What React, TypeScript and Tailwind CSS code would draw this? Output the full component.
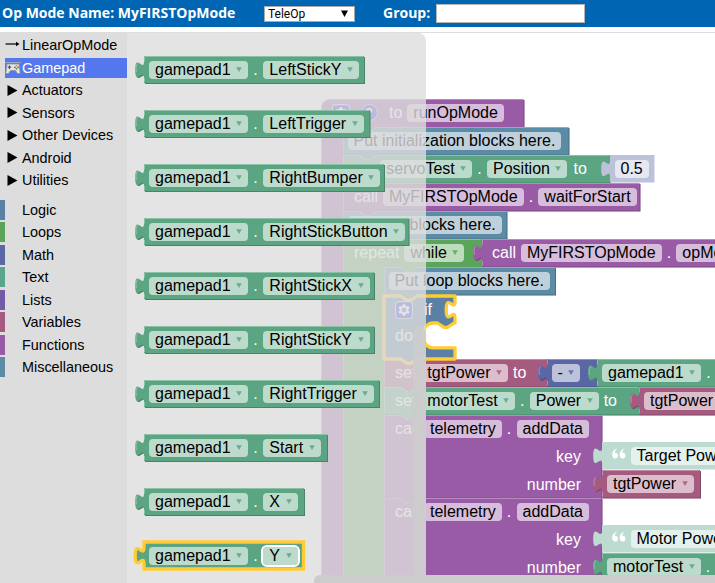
import React from "react";

const GREEN = "#5ba582";
const PURPLE = "#995ba5";
const COMMENT = "#5b8ba5";
const LOOP = "#5ba55b";
const LOGIC = "#5b80a5";
const VARIABLE = "#a55b80";
const MATH = "#5b67a5";
const NUMBER_SHADOW = "#bdc2db";
const TEXT_SHADOW = "#bddbd1";

type Kind = "value" | "statement" | "hat" | "if" | "topLoop";

const NOTCH_RIGHT = "l6.6,4.4 h3.3 l6.6,-4.4";
const NOTCH_LEFT = "l-6.6,4.4 h-3.3 l-6.6,-4.4";
const TAB_UP = "c0,-11 -8.8,8.8 -8.8,-8.25 s8.8,2.75 8.8,-8.25";
const TAB_DOWN = "c0,11 -8.8,-8.8 -8.8,8.25 s8.8,-2.75 8.8,8.25";

function outline(kind: Kind, w: number, h: number): string {
  switch (kind) {
    case "value":
      return `M0,0 H${w} V${h} H0 V22 ${TAB_UP} z`;
    case "hat":
      return `M0,8.8 A8.8,8.8 0 0 1 8.8,0 H${w} V28 H55 ${NOTCH_LEFT} H22 V${h} H0 z`;
    case "topLoop":
      return `M0,0 H16.5 ${NOTCH_RIGHT} H${w} V28 H74 ${NOTCH_LEFT} H41 V${h} H0 z`;
    case "if":
      return `M0,0 H16.5 ${NOTCH_RIGHT} H${w} V5.5 ${TAB_DOWN} V27 H70 ${NOTCH_LEFT} H48.8 a8.8,8.8 0 0 0 -8.8,8.8 V43 a8.8,8.8 0 0 0 8.8,8.8 H${w} V${h} H33 ${NOTCH_LEFT} H0 z`;
    default:
      return `M0,0 H16.5 ${NOTCH_RIGHT} H${w} V${h} H33 ${NOTCH_LEFT} H0 z`;
  }
}

function highlight(kind: Kind, w: number, h: number): string {
  if (kind === "value") return `M${w - 0.5},0.5 H0.5 V5.5 M-7.6,16 q-1.2,-8 1.6,-8.5 M0.5,22 V${h - 1}`;
  if (kind === "hat") return `M0.5,${h} V8.8 A8.3,8.3 0 0 1 8.8,0.5 H${w - 0.5}`;
  return `M0.5,${h - 1} V0.5 H16.5 ${NOTCH_RIGHT} H${w - 0.5}`;
}

interface BlockProps {
  x: number;
  y: number;
  w: number;
  h?: number;
  color: string;
  kind?: Kind;
  selected?: boolean;
  flat?: boolean;
  indent?: boolean;
  children?: React.ReactNode;
}

function Block({ x, y, w, h = 27.5, color, kind = "statement", selected, flat, indent, children }: BlockProps) {
  const d = outline(kind, w, h);
  return (
    <div className="absolute" style={{ left: x, top: y, width: w, height: h }}>
      <svg className="absolute top-0 left-0 h-full w-full overflow-visible">
        {!flat && !selected && (
          <>
            <path d={d} fill={color} transform="translate(1 1)" />
            <path d={d} fill="#000" fillOpacity="0.2" transform="translate(1 1)" />
          </>
        )}
        <path
          d={d}
          fill={color}
          stroke={selected ? "#fc3" : "none"}
          strokeWidth={selected ? 3.3 : 0}
          strokeLinejoin={kind === "if" ? "round" : "miter"}
        />
        {!flat && !selected && (
          <path d={highlight(kind, w, h)} fill="none" stroke="#fff" strokeOpacity="0.3" />
        )}
      </svg>
      <div
        className={`relative flex items-start gap-[5px] pt-[5px] text-base leading-[17px] whitespace-nowrap text-white ${
          indent ? "pl-[11.5px]" : "pl-[5px]"
        }`}
      >
        {children}
      </div>
    </div>
  );
}

function Dot() {
  return <span className="mr-[0.25px]">.</span>;
}

function Field({ text, arrow, active }: { text: string; arrow?: string; active?: boolean }) {
  return (
    <span
      className={`flex h-[17.5px] shrink-0 items-center gap-[5.5px] rounded-[4px] bg-white/60 px-[6px] text-black ${
        active ? "outline-2 outline-white" : ""
      }`}
    >
      <span>{text}</span>
      {arrow && (
        <svg width="6" height="5" viewBox="0 0 6 5" className="shrink-0">
          <path d="M0.2,0.2 H5.8 L3,5 z" fill={arrow} fillOpacity="0.85" />
        </svg>
      )}
    </span>
  );
}

function Gear() {
  return (
    <svg width="18" height="18" viewBox="0 0 16 16" className="shrink-0">
      <rect x="0.5" y="0.5" width="15" height="15" rx="3" fill="#00f" fillOpacity="0.6" stroke="#c5cbf0" />
      <path
        fill="#fff"
        d="m4.203,7.296 0,1.368 -0.92,0.677 -0.11,0.41 0.9,1.559 0.41,0.11 1.043,-0.457 1.187,0.683 0.127,1.134 0.3,0.3 1.8,0 0.3,-0.299 0.127,-1.138 1.185,-0.682 1.046,0.458 0.409,-0.11 0.9,-1.559 -0.11,-0.41 -0.92,-0.677 0,-1.366 0.92,-0.677 0.11,-0.41 -0.9,-1.559 -0.409,-0.109 -1.046,0.458 -1.185,-0.682 -0.127,-1.138 -0.3,-0.299 -1.8,0 -0.3,0.3 -0.126,1.135 -1.187,0.682 -1.043,-0.457 -0.41,0.11 -0.899,1.559 0.108,0.409z"
      />
      <circle cx="8" cy="8" r="2.2" fill="#5555dd" />
    </svg>
  );
}

function Help() {
  return (
    <span className="flex h-[17px] w-[17px] shrink-0 items-center justify-center rounded-full border border-[#c5cbf0] bg-[#0000ff99] text-[13px] font-bold">
      ?
    </span>
  );
}

function OpenQuote() {
  return (
    <svg width="14" height="12" viewBox="0 0 14 12" className="mt-[1px] ml-[5px] shrink-0">
      <path
        d="M5.8,0.4 C3.8,1.3 2.8,3 2.7,4.8 C4.6,4.4 6,5.7 6,7.5 C6,9.4 4.8,10.6 3.2,10.6 C1.2,10.6 0.2,9 0.2,6.8 C0.2,3.6 2.2,0.8 5.8,0.4 z M13.3,0.4 C11.3,1.3 10.3,3 10.2,4.8 C12.1,4.4 13.5,5.7 13.5,7.5 C13.5,9.4 12.3,10.6 10.7,10.6 C8.7,10.6 7.7,9 7.7,6.8 C7.7,3.6 9.7,0.8 13.3,0.4 z"
        fill="#fff"
      />
    </svg>
  );
}

function Telemetry({ y }: { y: number }) {
  return (
    <Block x={384} y={y} w={217.5} h={82.7} color={PURPLE} indent>
      <div className="flex w-[186px] flex-col gap-[10.5px]">
        <div className="flex gap-[5px]">
          <span>call</span>
          <Field text="telemetry" />
          <Dot />
          <Field text="addData" />
        </div>
        <span className="text-right">key</span>
        <span className="text-right">number</span>
      </div>
    </Block>
  );
}

function Workspace() {
  return (
    <div className="absolute -top-[33.5px] -left-[127.5px] h-[585px] w-[716px]">
      <Block x={321} y={99.5} w={202.5} h={500} color={PURPLE} kind="hat" indent>
        <Gear />
        <span className="ml-[5.5px] flex">
          <Help />
        </span>
        <span className="ml-[6.5px]">to</span>
        <Field text="runOpMode" />
      </Block>
      <Block x={343} y={127.5} w={225.5} color={COMMENT}>
        <Field text="Put initialization blocks here." />
      </Block>
      <Block x={343} y={155.5} w={267} color={GREEN} indent>
        <span>set</span>
        <Field text="servoTest" arrow={GREEN} />
        <Dot />
        <Field text="Position" arrow={GREEN} />
        <span className="ml-px">to</span>
      </Block>
      <Block x={610} y={155.5} w={44.5} color={NUMBER_SHADOW} kind="value" flat>
        <Field text="0.5" />
      </Block>
      <Block x={343} y={183.5} w={296.5} color={PURPLE} indent>
        <span>call</span>
        <Field text="MyFIRSTOpMode" />
        <Dot />
        <Field text="waitForStart" />
      </Block>
      <Block x={343} y={211.5} w={163.5} color={COMMENT}>
        <Field text="Put run blocks here." />
      </Block>
      <Block x={343} y={239.5} w={139} h={400} color={LOOP} kind="topLoop" indent>
        <span>repeat</span>
        <Field text="while" arrow={LOOP} />
      </Block>
      <Block x={482} y={239.5} w={300} color={PURPLE} kind="value" indent>
        <span className="-ml-px">call</span>
        <Field text="MyFIRSTOpMode" />
        <Dot />
        <Field text="opModeIsActive" />
      </Block>
      <Block x={384} y={267.5} w={171} color={COMMENT}>
        <Field text="Put loop blocks here." />
      </Block>
      <Block x={384} y={359.5} w={163} color={VARIABLE} indent>
        <span>set</span>
        <Field text="tgtPower" arrow={VARIABLE} />
        <span>to</span>
      </Block>
      <Block x={547} y={359.5} w={50.5} color={MATH} kind="value">
        <Field text="-" arrow={MATH} />
      </Block>
      <Block x={597.5} y={359.5} w={250} color={GREEN} kind="value">
        <Field text="gamepad1" arrow={GREEN} />
        <Dot />
      </Block>
      <Block x={384} y={387.5} w={255} color={GREEN} indent>
        <span>set</span>
        <Field text="motorTest" arrow={GREEN} />
        <Dot />
        <Field text="Power" arrow={GREEN} />
        <span>to</span>
      </Block>
      <Block x={639.5} y={387.5} w={100} color={VARIABLE} kind="value">
        <Field text="tgtPower" arrow={VARIABLE} />
      </Block>
      <Telemetry y={415.5} />
      <Block x={602} y={442.5} w={200} color={TEXT_SHADOW} kind="value" flat>
        <OpenQuote />
        <Field text="Target Power" />
      </Block>
      <Block x={602.5} y={470.7} w={98} color={VARIABLE} kind="value">
        <Field text="tgtPower" arrow={VARIABLE} />
      </Block>
      <Telemetry y={498.5} />
      <Block x={602} y={525.5} w={200} color={TEXT_SHADOW} kind="value" flat>
        <OpenQuote />
        <Field text="Motor Power" />
      </Block>
      <Block x={602.5} y={553.7} w={200} color={GREEN} kind="value">
        <Field text="motorTest" arrow={GREEN} />
        <Dot />
      </Block>
      <Block x={384.5} y={296.2} w={71} h={63} color={LOGIC} kind="if" selected indent>
        <div className="-ml-[0.5px] flex flex-col gap-[8px]">
          <div className="flex items-start gap-[11px]">
            <Gear />
            <span>if</span>
          </div>
          <span>do</span>
        </div>
      </Block>
    </div>
  );
}

const FLYOUT: { name: string; w: number }[] = [
  { name: "LeftStickY", w: 220.5 },
  { name: "LeftTrigger", w: 226 },
  { name: "RightBumper", w: 240.5 },
  { name: "RightStickButton", w: 265 },
  { name: "RightStickX", w: 230.5 },
  { name: "RightStickY", w: 230.5 },
  { name: "RightTrigger", w: 235.5 },
  { name: "Start", w: 183.5 },
  { name: "X", w: 160.5 },
  { name: "Y", w: 160 },
];

function Flyout() {
  return (
    <div className="absolute inset-0">
      <div className="h-full w-[299px] rounded-tr-[8px] bg-[#ddd]/80" />
      {FLYOUT.map((b, i) => (
        <Block
          key={b.name}
          x={17}
          y={23 + i * 54}
          w={b.w - 0.5}
          h={27}
          color={GREEN}
          kind="value"
          selected={b.name === "Y"}
        >
          <Field text="gamepad1" arrow={GREEN} />
          <span className="mr-[0.75px]">.</span>
          <Field text={b.name} arrow={GREEN} active={b.name === "Y"} />
        </Block>
      ))}
    </div>
  );
}

function GamepadIcon() {
  return (
    <svg width="16" height="14" viewBox="0 0 16 14" className="shrink-0">
      <path d="M0,1.5 H16" stroke="#9aa6c8" />
      <path d="M2,3 H14 L15.2,12.5 H12.5 L10.5,9.5 H5.5 L3.5,12.5 H0.8 z" fill="#e6e6e0" stroke="#8d93a8" strokeWidth="0.8" />
      <path d="M4.5,4.5 v3.4 M2.8,6.2 h3.4" stroke="#555" strokeWidth="1.2" />
      <circle cx="11.5" cy="4.8" r="0.9" fill="#b9a23a" />
      <circle cx="11.5" cy="7.8" r="0.9" fill="#4c8a4c" />
      <circle cx="9.9" cy="6.3" r="0.9" fill="#4a5fa8" />
      <circle cx="13.1" cy="6.3" r="0.9" fill="#a84a4a" />
    </svg>
  );
}

function Toolbox() {
  const groups = ["Actuators", "Sensors", "Other Devices", "Android", "Utilities"];
  const categories = [
    { name: "Logic", bar: "bg-[#5b80a5]" },
    { name: "Loops", bar: "bg-[#5ba55b]" },
    { name: "Math", bar: "bg-[#5b67a5]" },
    { name: "Text", bar: "bg-[#5ba58c]" },
    { name: "Lists", bar: "bg-[#745ba5]" },
    { name: "Variables", bar: "bg-[#a55b80]" },
    { name: "Functions", bar: "bg-[#995ba5]" },
    { name: "Miscellaneous", bar: "bg-[#5b8ba5]" },
  ];
  return (
    <nav className="flex w-[127px] shrink-0 flex-col bg-[#ddd] pt-[3px] text-[14.4px] leading-5 text-black">
      <div className="mb-[2.5px] flex h-5 items-center pl-[5px]">
        <svg width="17" height="10" viewBox="0 0 17 10" className="shrink-0">
          <path d="M0.5,4 H12" stroke="#000" strokeWidth="1.2" />
          <path d="M11,1.8 L14.5,4 L11,6.2 z" />
        </svg>
        LinearOpMode
      </div>
      <div className="mb-[2.5px] ml-[5px] flex h-5 items-center gap-px bg-[#57e] text-white">
        <GamepadIcon />
        Gamepad
      </div>
      {groups.map((g) => (
        <div key={g} className="mb-[2.5px] flex h-5 items-center gap-1 pl-[7px]">
          <svg width="11" height="11" viewBox="0 0 11 11" className="shrink-0">
            <path d="M0.5,0 L10.5,5.5 L0.5,11 z" />
          </svg>
          {g}
        </div>
      ))}
      <div className="h-[7px]" />
      {categories.map((c) => (
        <div key={c.name} className="mb-[2.5px] flex h-5 items-center gap-[17px]">
          <div className={`h-5 w-[5px] ${c.bar}`} />
          {c.name}
        </div>
      ))}
    </nav>
  );
}

export default function App() {
  return (
    <div className="flex h-[583px] w-[715px] flex-col overflow-hidden bg-white font-['Liberation_Sans',Arial,sans-serif]">
      <header className="flex h-[27px] shrink-0 items-center bg-[#0066b3] pl-[2px] font-['Open_Sans',sans-serif] text-[14px] font-bold text-white">
        <span className="w-[262px] pb-[2px] whitespace-nowrap">Op Mode Name: MyFIRSTOpMode</span>
        <div className="flex h-4 w-[91px] items-center justify-between border border-[#a9a9a9] bg-white pr-[6px] pl-[3px] font-[Roboto,sans-serif] text-[12px] leading-[14px] font-normal text-black">
          TeleOp
          <svg width="7" height="7" viewBox="0 0 7 7">
            <path d="M0,0.5 H7 L3.5,7 z" />
          </svg>
        </div>
        <span className="ml-7 w-[53px] pb-[2px]">Group:</span>
        <div className="h-[19px] w-[149px] border border-[#b5b5b5] bg-white" />
      </header>
      <div className="h-[5px] shrink-0" />
      <div className="flex min-h-0 flex-1">
        <Toolbox />
        <main className="relative min-w-0 flex-1 overflow-hidden border-t border-[#ddd]">
          <Workspace />
          <Flyout />
          <div className="absolute top-[294px] left-[286px] h-[270px] w-[13px] rounded-t-[6px] bg-[#ccc]/90" />
          <div className="absolute top-[542px] left-[187px] h-[12px] w-[500px] rounded-l-[6px] bg-[#ccc]" />
        </main>
      </div>
    </div>
  );
}
